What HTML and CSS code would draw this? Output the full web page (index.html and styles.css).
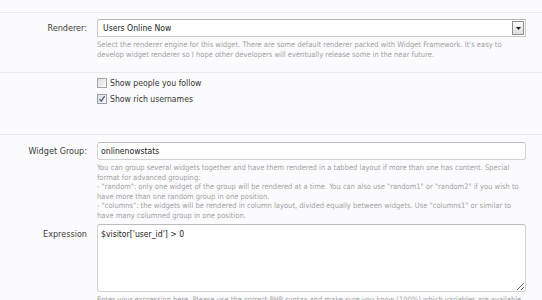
FILE: index.html
```html
<!DOCTYPE html>
<html>
<head>
	<title>Widget Options</title>
	<link rel="stylesheet" href="styles.css">
</head>
<body>
	<!-- renderer -->
	<div class="row first">
		<div class="label">Renderer:</div>
		<div class="field">
			<div class="select">
				<span class="select-text">Users Online Now</span>
				<span class="select-arrow">
					<svg width="5" height="3" viewBox="0 0 5 3"><path d="M0 0h5L2.5 3z" fill="#222"/></svg>
				</span>
			</div>
			<p class="hint">Select the renderer engine for this widget. There are some default renderer packed with Widget Framework. It's easy to<br>develop widget renderer so I hope other developers will eventually release some in the near future.</p>
		</div>
	</div>

	<!-- renderer options -->
	<div class="row options">
		<div class="label"></div>
		<div class="field">
			<label class="check-row"><span class="check"></span>Show people you follow</label>
			<label class="check-row"><span class="check checked"><svg width="8" height="8" viewBox="0 0 8 8"><path d="M1.5 4.2l1.8 2L6.6 1.2" fill="none" stroke="#55617a" stroke-width="1.3"/></svg></span>Show rich usernames</label>
		</div>
	</div>

	<!-- group + expression -->
	<div class="row group">
		<div class="label">Widget Group:</div>
		<div class="field">
			<input class="text-input" type="text" value="onlinenowstats">
			<p class="hint">You can group several widgets together and have them rendered in a tabbed layout if more than one has content. Special<br>format for advanced grouping:<br>- "random": only one widget of the group will be rendered at a time. You can also use "random1" or "random2" if you wish to<br>have more than one random group in one position.<br>- "columns": the widgets will be rendered in column layout, divided equally between widgets. Use "columns1" or similar to<br>have many columned group in one position.</p>
		</div>
		<div class="label label-area">Expression</div>
		<div class="field">
			<textarea class="text-area">$visitor['user_id'] > 0</textarea>
			<p class="hint">Enter your expression here. Please use the correct PHP syntax and make sure you know (100%) which variables are available</p>
		</div>
	</div>
</body>
</html>
```

FILE: styles.css
```css
body {
	margin: 0;
	background-color: #fbfbfd;
	font-family: "DejaVu Sans Condensed", "DejaVu Sans", sans-serif;
	color: #333;
	overflow: hidden;
}

.row {
	display: grid;
	grid-template-columns: 87px 429px;
	column-gap: 10px;
	row-gap: 4px;
	border-top: 1px solid #e6ebf0;
	padding: 6px 0 13px;
}
.first {
	margin-top: 12px;
}
.options {
	padding: 2px 0 27px;
}
.group {
	padding-top: 7px;
}

.label {
	text-align: right;
	font-size: 9px;
	color: #3c3c3c;
	padding-top: 4px;
}
.label-area {
	padding-top: 5px;
}

.field {
	min-width: 0;
}

.select {
	display: flex;
	align-items: center;
	height: 16px;
	border: 1px solid #c8c8c8;
	border-top-color: #b4b4b4;
	border-radius: 3px 0 0 0;
	background-color: #fff;
	padding-left: 5px;
	padding-right: 1px;
}
.select-text {
	flex: 1;
	font-size: 8.6px;
	color: #222;
}
.select-arrow {
	display: flex;
	align-items: center;
	justify-content: center;
	width: 10px;
	height: 12px;
	border: 1px solid #8e8e8e;
	background: linear-gradient(#fdfdfd, #dcdcdc);
}

.text-input, .text-area {
	display: block;
	box-sizing: border-box;
	width: 100%;
	margin: 0;
	border: 1px solid #d2d2d2;
	border-top-color: #bcbcbc;
	border-radius: 3px;
	background-color: #fff;
	font-family: "DejaVu Sans Condensed", "DejaVu Sans", sans-serif;
	font-size: 8.6px;
	color: #222;
	outline: none;
}
.text-input {
	height: 18px;
	padding: 0 3px;
}
.text-area {
	height: 68px;
	padding: 4px 3px;
	resize: vertical;
}

.hint {
	margin: 3px 0 0;
	font-size: 7.5px;
	line-height: 9.5px;
	color: #a2a2a2;
	white-space: nowrap;
}

.check-row {
	display: flex;
	align-items: center;
	gap: 3px;
	height: 16px;
	font-size: 8.6px;
	color: #333;
}
.check {
	display: flex;
	align-items: center;
	justify-content: center;
	box-sizing: border-box;
	width: 10px;
	height: 10px;
	border: 1px solid #a4a4a4;
	background: linear-gradient(135deg, #dedede, #fafafa);
}
.checked {
	border-color: #9aa0b0;
}
```
